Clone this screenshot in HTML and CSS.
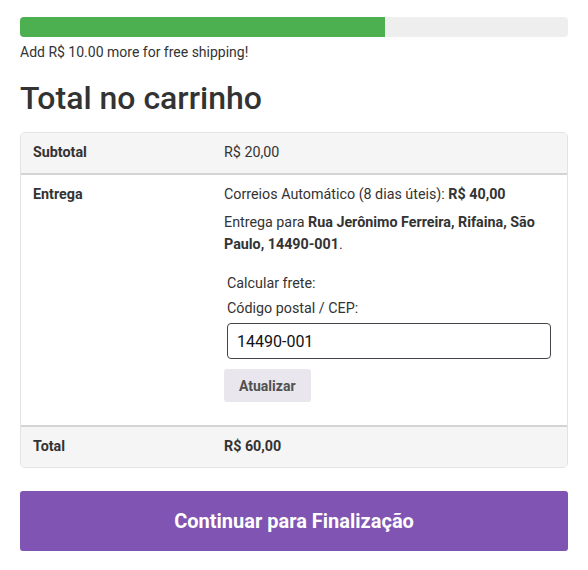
FILE: index.html
```html
<!DOCTYPE html>
<html lang="pt-BR">
<head>
<meta charset="utf-8">
<title>Total no carrinho</title>
<link rel="stylesheet" href="styles.css">
</head>
<body>
<div class="cart">
  <div class="progress"><div class="progress-fill" style="width: 66.6%"></div></div>
  <p class="progress-note">Add R$ 10.00 more for free shipping!</p>
  <h2 class="title">Total no carrinho</h2>
  <div class="totals">
    <div class="row row-shaded">
      <div class="label">Subtotal</div>
      <div class="value">R$ 20,00</div>
    </div>
    <div class="row row-ship">
      <div class="label">Entrega</div>
      <div class="value">
        <p class="line">Correios Automático (8 dias úteis): <strong>R$ 40,00</strong></p>
        <p class="line">Entrega para <strong>Rua Jerônimo Ferreira, Rifaina, São Paulo, 14490-001</strong>.</p>
        <div class="calc">
          <p class="calc-line">Calcular frete:</p>
          <p class="calc-line">Código postal / CEP:</p>
          <input class="cep" type="text" value="14490-001">
        </div>
        <button class="update">Atualizar</button>
      </div>
    </div>
    <div class="row row-shaded row-total">
      <div class="label">Total</div>
      <div class="value"><strong>R$ 60,00</strong></div>
    </div>
  </div>
  <button class="checkout">Continuar para Finalização</button>
</div>
</body>
</html>
```
FILE: styles.css
```css
* { box-sizing: border-box; }
body {
  margin: 0;
  font-family: Roboto, "Liberation Sans", sans-serif;
  color: #333;
  background: #fff;
}
.cart {
  padding: 17px 20px 0 20px;
}
.progress {
  height: 20px;
  background: #eeeeee;
  border-radius: 4px;
  overflow: hidden;
}
.progress-fill {
  height: 100%;
  background: #4caf50;
}
.progress-note {
  margin: 6px 0 0 0;
  font-size: 14px;
  line-height: 18px;
  color: #333;
}
.title {
  margin: 19px 0 0 0;
  font-size: 32px;
  font-weight: 500;
  line-height: 36px;
  color: #333;
}
.totals {
  margin-top: 16px;
  border: 1px solid #e3e3e3;
  border-radius: 5px;
  overflow: hidden;
  font-size: 14.3px;
}
.row {
  display: flex;
  border-top: 2px solid #d4d4d4;
}
.row:first-child { border-top: none; }
.row-shaded { background: #f5f5f5; }
.label {
  width: 190px;
  flex: none;
  padding: 11px 13px 12px 12px;
  font-weight: 700;
  line-height: 17px;
}
.value {
  flex: 1;
  padding: 11px 13px 12px 13px;
  line-height: 17px;
}
.row-ship .label, .row-ship .value { padding-top: 11px; padding-bottom: 23px; }
.line {
  margin: 0 0 10px 0;
  line-height: 22px;
}
.line:first-child { line-height: 17px; margin-bottom: 8px; }
.calc {
  padding: 10px 3px 0 3px;
}
.calc-line {
  margin: 0 0 8px 0;
  line-height: 17px;
}
.calc-line:last-of-type { margin-bottom: 6px; }
.cep {
  display: block;
  width: 100%;
  height: 36px;
  margin: 0;
  padding: 0 9px;
  border: 1px solid #43454b;
  border-radius: 4px;
  font-family: inherit;
  font-size: 16px;
  color: #111;
  background: #fff;
}
.update {
  margin-top: 10px;
  height: 33px;
  padding: 0 15px;
  border: none;
  border-radius: 3px;
  background: #e9e6ed;
  color: #515151;
  font-family: inherit;
  font-size: 14px;
  font-weight: 700;
}
.row-total .label, .row-total .value { padding-top: 11px; padding-bottom: 12px; }
.checkout {
  display: block;
  width: 100%;
  margin-top: 23px;
  height: 60px;
  border: none;
  border-radius: 3px;
  background: #7f54b3;
  color: #fff;
  font-family: inherit;
  font-size: 20px;
  font-weight: 700;
}
```
